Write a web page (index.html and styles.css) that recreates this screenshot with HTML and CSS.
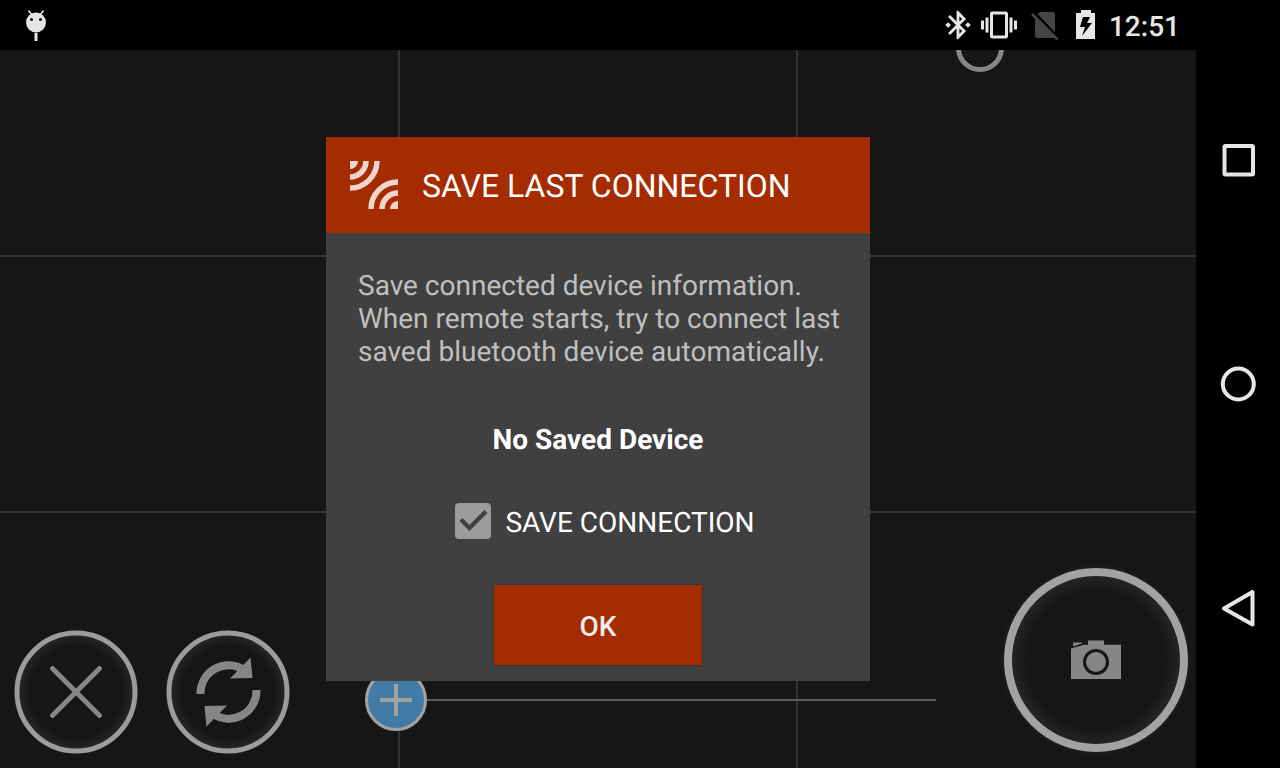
FILE: index.html
```html
<!DOCTYPE html>
<html lang="en">
<head>
    <meta charset="UTF-8">
    <meta name="viewport" content="width=device-width, initial-scale=1.0">
    <title>Camera Remote</title>
    <link rel="stylesheet" href="styles.css">
</head>
<body>
    <div class="screen">
        <!-- Status bar -->
        <header class="status-bar">
            <svg class="debug-icon" width="24" height="36" viewBox="0 0 24 36">
                <circle cx="12" cy="15.500" r="10"/>
                <path d="M4.500 3.500l3 4M19.500 3.500l-3 4" stroke="#e6e6e6" stroke-width="1.500"/>
                <path d="M10.500 26h3v8h-3z"/>
                <circle cx="7.500" cy="12.500" r="1.500" fill="#000"/>
                <circle cx="16.500" cy="12.500" r="1.500" fill="#000"/>
            </svg>
            <div class="status-icons">
                <svg width="34" height="34" viewBox="0 0 24 24">
                    <path d="M7 12l-2-2-2 2 2 2 2-2zm10.710-4.290L12 2h-1v7.590L6.410 5 5 6.410 10.590 12 5 17.590 6.410 19 11 14.410V22h1l5.710-5.710-4.300-4.290 4.300-4.290zM13 5.830l1.880 1.880L13 9.590V5.830zm1.880 10.460L13 18.170v-3.760l1.880 1.880zM19 10l-2 2 2 2 2-2-2-2z"/>
                </svg>
                <svg width="36" height="36" viewBox="0 0 24 24">
                    <path d="M0 15h2V9H0v6zm3 2h2V7H3v10zm19-8v6h2V9h-2zm-3 8h2V7h-2v10zM16.500 3h-9C6.670 3 6 3.670 6 4.500v15c0 .83.67 1.500 1.500 1.500h9c.83 0 1.500-.67 1.500-1.500v-15c0-.83-.67-1.500-1.500-1.500zM16 19H8V5h8v14z"/>
                </svg>
                <svg width="40" height="34" viewBox="0 0 40 34">
                    <path class="dim" d="M17 4h13q2 0 2 2v24H14q-2 0-2-2V9z"/>
                    <path d="M11 4.500L36 30.500" stroke="#000" stroke-width="3"/>
                    <path d="M9 6L34.500 31.500" stroke="#454545" stroke-width="2.500"/>
                </svg>
                <svg width="34" height="34" viewBox="0 0 34 34">
                    <path fill-rule="evenodd" d="M12 2h10v3h4v26H7V5h5zM14 9L11 19h5L13 28 23 15h-5l3-6z"/>
                </svg>
                <time class="clock">12:51</time>
            </div>
        </header>

        <!-- Camera view -->
        <main class="viewfinder">
            <button class="mode-ring" aria-label="Mode"></button>

            <div class="controls">
                <button class="round-btn" aria-label="Close">
                    <svg width="136" height="136" viewBox="0 0 136 136">
                        <defs>
                            <radialGradient id="glow">
                                <stop offset="78%" stop-color="#161616"/>
                                <stop offset="100%" stop-color="#282828"/>
                            </radialGradient>
                        </defs>
                        <circle class="ring" cx="68" cy="68" r="59"/>
                        <path d="M44.500 44.500l47 47M91.500 44.500l-47 47" stroke="#868686" stroke-width="5" stroke-linecap="round"/>
                    </svg>
                </button>
                <button class="round-btn" aria-label="Switch camera">
                    <svg width="136" height="136" viewBox="0 0 136 136">
                        <circle class="ring" cx="68" cy="68" r="59"/>
                        <g id="arrow">
                            <path d="M40.500 70A28 28 0 0 1 84 46" fill="none" stroke="#868686" stroke-width="8"/>
                            <path d="M90.500 33.500L92.500 54L70 54.500z" fill="#868686"/>
                        </g>
                        <use href="#arrow" transform="rotate(180 68.500 68)"/>
                    </svg>
                </button>
                <input class="zoom" type="range" min="0" max="100" value="0" aria-label="Zoom">
                <button class="round-btn" aria-label="Take photo">
                    <svg width="200" height="200" viewBox="0 0 200 200">
                        <circle class="halo" cx="100" cy="100" r="95"/>
                        <circle class="ring shutter" cx="100" cy="100" r="88"/>
                        <g fill="#868686">
                            <path d="M75 119V88.500L88 84.700H92V80.500H108V84.700H125V119z"/>
                            <path d="M77 82.500h9v1l-9 3z"/>
                        </g>
                        <circle cx="100" cy="102" r="11.500" fill="none" stroke="#161616" stroke-width="3"/>
                    </svg>
                </button>
            </div>

            <!-- Save connection dialog -->
            <div class="overlay">
                <section class="dialog" role="dialog" aria-labelledby="dialogTitle">
                    <div class="dialog-header">
                        <svg width="48" height="48" viewBox="0 0 48 48">
                            <g id="waves" fill="none" stroke="#efd5cc" stroke-width="5.500">
                                <path d="M0 0H8A8 8 0 0 1 0 8z" fill="#efd5cc" stroke="none"/>
                                <path d="M16 0A16 16 0 0 1 0 16M27 0A27 27 0 0 1 0 27"/>
                            </g>
                            <use href="#waves" transform="rotate(180 24 24)"/>
                        </svg>
                        <h1 id="dialogTitle">SAVE LAST CONNECTION</h1>
                    </div>
                    <div class="dialog-body">
                        <p class="message">Save connected device information.<br>When remote starts, try to connect last<br>saved bluetooth device automatically.</p>
                        <p class="device">No Saved Device</p>
                        <div class="save-option">
                            <input type="checkbox" id="save" checked>
                            <label for="save">SAVE CONNECTION</label>
                        </div>
                        <button class="ok-btn">OK</button>
                    </div>
                </section>
            </div>
        </main>
    </div>

    <!-- System navigation -->
    <nav class="nav-bar">
        <button aria-label="Recent apps">
            <svg width="40" height="40" viewBox="0 0 40 40"><rect x="6.500" y="6" width="28.500" height="28.500" rx="1"/></svg>
        </button>
        <button aria-label="Home">
            <svg width="40" height="40" viewBox="0 0 40 40"><circle cx="20.300" cy="20" r="15.500"/></svg>
        </button>
        <button aria-label="Back">
            <svg width="40" height="40" viewBox="0 0 40 40"><path d="M6 20.500L34.500 4V36.500z" stroke-linejoin="round"/></svg>
        </button>
    </nav>
</body>
</html>
```

FILE: styles.css
```css
* {
    box-sizing: border-box;
}
body {
    display: flex;
    min-height: 100vh;
    margin: 0;
    background-color: #000;
    color: #fff;
    font-family: Roboto, sans-serif;
    font-size: 28px;
    line-height: 33px;
    text-rendering: geometricPrecision;
}
button {
    padding: 0;
    border: none;
    background: none;
    color: inherit;
    font: inherit;
    cursor: pointer;
}
svg {
    display: block;
}
h1, p {
    margin: 0;
}
/* Camera screen with rule of thirds lines */
.screen {
    flex: 1;
    display: flex;
    flex-direction: column;
    background:
        linear-gradient(#333, #333) calc(100% / 3) 0 / 2px 100% no-repeat,
        linear-gradient(#333, #333) calc(200% / 3) 0 / 2px 100% no-repeat,
        linear-gradient(#333, #333) 0 calc(100% / 3) / 100% 2px no-repeat,
        linear-gradient(#333, #333) 0 calc(200% / 3) / 100% 2px no-repeat,
        #161616;
}
.status-bar {
    display: flex;
    justify-content: space-between;
    align-items: center;
    height: 50px;
    padding: 0 16px 0 24px;
    background-color: #000;
}
.status-bar svg {
    fill: #e6e6e6;
}
.status-bar .dim {
    fill: #454545;
}
.status-icons {
    display: flex;
    align-items: center;
    gap: 6px;
}
.clock {
    padding-top: 3px;
    color: #e6e6e6;
    font-weight: 500;
}
.viewfinder {
    position: relative;
    flex: 1;
    display: flex;
    flex-direction: column;
    justify-content: flex-end;
    overflow: hidden;
}
.mode-ring {
    position: absolute;
    top: -26px;
    right: 192px;
    width: 48px;
    height: 48px;
    border: 5px solid #868686;
    border-radius: 50%;
}
.controls {
    display: flex;
    align-items: flex-end;
    gap: 16px;
    padding: 0 0 8px 8px;
}
.ring {
    fill: url(#glow);
    stroke: #9c9c9c;
    stroke-width: 5px;
}
.shutter {
    stroke: #a2a2a2;
    stroke-width: 8px;
}
.halo {
    fill: #1b1b1b;
}
.zoom {
    appearance: none;
    flex: 1;
    min-width: 0;
    height: 64px;
    margin: 0 44px 28px 53px;
    background: linear-gradient(#5e5e5e, #5e5e5e) center / 100% 2px no-repeat;
}
.zoom::-webkit-slider-thumb {
    appearance: none;
    width: 62px;
    height: 62px;
    border: 3px solid #a2a2a2;
    border-radius: 50%;
    background:
        linear-gradient(#a2a2a2, #a2a2a2) center / 32px 4px no-repeat,
        linear-gradient(#a2a2a2, #a2a2a2) center / 4px 32px no-repeat,
        #427ba6;
}
.overlay {
    position: absolute;
    inset: 0;
    display: flex;
    justify-content: center;
    align-items: center;
}
.dialog {
    width: 544px;
    background-color: #404040;
}
.dialog-header {
    display: flex;
    align-items: center;
    gap: 24px;
    padding: 24px;
    background-color: #a52b00;
}
.dialog-header h1 {
    padding-top: 3px;
    font-size: 32px;
    font-weight: 400;
}
.dialog-body {
    display: flex;
    flex-direction: column;
    align-items: center;
    padding: 36px 32px 16px;
}
.message {
    align-self: stretch;
    color: #bfbfbf;
    white-space: nowrap;
}
.device {
    margin-top: 55px;
    font-weight: 700;
}
.save-option {
    display: flex;
    align-items: center;
    gap: 14px;
    margin: 47px 0 46px 14px;
}
.save-option label {
    padding-top: 3px;
}
.save-option input {
    appearance: none;
    width: 36px;
    height: 36px;
    margin: 0;
    border-radius: 4px;
    background-color: #9b9b9b;
}
.save-option input:checked::before {
    content: "";
    display: block;
    width: 36px;
    height: 36px;
    background-color: #404040;
    clip-path: polygon(4px 18px, 7px 15px, 14px 22px, 29px 7px, 32px 10px, 14px 28px);
}
.ok-btn {
    width: 208px;
    height: 80px;
    padding-top: 3px;
    background-color: #a52b00;
    box-shadow: 0 0 2px rgba(0, 0, 0, 0.4);
    color: #ebebeb;
    font-weight: 500;
}
.nav-bar {
    display: flex;
    flex-direction: column;
    width: 84px;
    padding: 48px 0;
}
.nav-bar button {
    flex: 1;
    display: flex;
    justify-content: center;
    align-items: center;
}
.nav-bar svg {
    fill: none;
    stroke: #e6e6e6;
    stroke-width: 4px;
}
```
